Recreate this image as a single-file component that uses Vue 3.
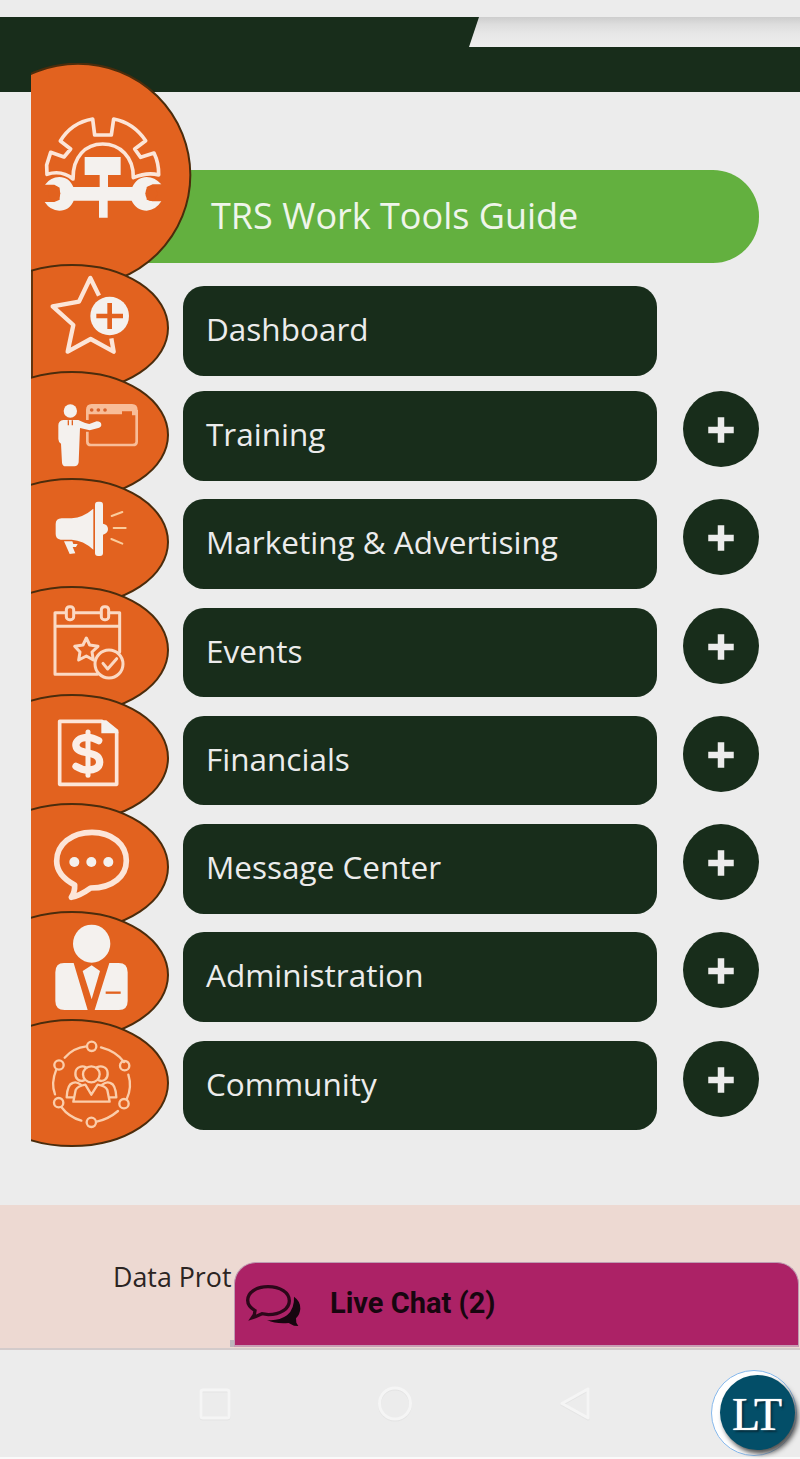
<template>
  <div class="screen">
    <header class="header">
      <div class="header__notch"></div>
    </header>

    <main class="main">
      <div class="tabs">
        <svg class="tabs__tools" viewBox="0 0 486 672">
          <ellipse class="tab-shape" cx="141" cy="336" rx="337" ry="334" />
          <g transform="translate(-33 -24)" class="line line--gear">
            <path d="M81 358L80 330L92 292L132 306L152 282L121 258Q154 203 218 192L224 240H274L281 192Q340 203 377 257L344 282L362 307L402 294Q417 325 416 360Q383 350 340 368C341 305 299 267 248 267S158 305 159 372Q125 344 81 358Z" />
            <path class="fill" d="M194 306H302V360H264V396H337C347 377 360 366 380 366Q404 366 424 388H398L380 396V434L397 439H424Q407 466 380 467C361 467 344 456 335 437H263V488H237V437H161C153 456 138 467 118 467Q91 467 74 441H103L119 434V398L103 389H75Q92 366 118 366C138 366 152 377 160 396H239V360H194Z" />
            <ellipse class="hole" cx="103" cy="415" rx="18" ry="23" />
            <ellipse class="hole" cx="394" cy="415" rx="18" ry="23" />
          </g>
        </svg>

        <svg v-for="item in items" :key="item.icon" class="tabs__item" viewBox="0 0 420 384">
          <ellipse class="tab-shape" cx="123" cy="192" rx="288" ry="189" />

          <g v-if="item.icon === 'star'" transform="translate(-33 -27)">
            <path class="edge" d="M36 45V370" />
            <path class="line line--star" d="M237 122L211 69L177 140L98 154L160 210L143 290L212 252L281 290L274 250" />
            <circle class="fill" cx="269" cy="183" r="58" />
            <path class="cut cut--plus" d="M269 144V222M229 183H309" />
          </g>

          <g v-else-if="item.icon === 'training'" transform="translate(-33 -18)">
            <g class="soft">
              <path class="soft__fill" d="M198 148V135Q198 117 215 117H336Q353 117 353 135V151H336V139H306V148Z" />
              <path d="M202 165V145M202 200V230Q202 240 213 240H338Q350 240 350 230V135" />
            </g>
            <path class="dots" d="M215 135h.1M235 135h.1M255 135h.1" />
            <circle class="fill" cx="151" cy="138" r="20" />
            <path class="fill" d="M130 165H175Q196 175 208 177L230 169Q244 169 244 180Q244 187 232 190L209 196L180 189L176 292Q174 304 163 304H138Q127 304 126 293L123 236Q115 231 115 222V181Q115 167 130 165Z" />
            <path class="cut cut--thin" d="M145 166V181M157 166V181" />
          </g>

          <g v-else-if="item.icon === 'megaphone'" transform="translate(-33 -9)">
            <path class="fill" d="M125 130H155Q190 127 220 101V224Q190 196 155 194H122Q107 192 107 177V147Q107 131 125 130ZM132 199H157L160 207H173L168 216H158L166 235L149 237Z" />
            <rect class="fill" x="225" y="80" width="24" height="163" rx="9" />
            <path class="fill" d="M249 146Q264 149 264 162T249 179Z" />
            <path class="rays" d="M275 123L307 111M281 159H317M274 192L307 206" />
          </g>

          <g v-else-if="item.icon === 'calendar'" transform="translate(-33 -18)" class="line line--calendar">
            <path d="M137 98H105V283H232M163 98H242M267 98H299V216M105 139H299" />
            <rect x="139" y="80" width="22" height="39" rx="9" />
            <rect x="244" y="80" width="22" height="39" rx="9" />
            <path d="M199 174L209 195L234 199L216 216L220 240L199 228L176 240L180 216L164 199L189 195Z" />
            <circle class="badge" cx="267" cy="252" r="42" />
            <path d="M249 250L263 267L290 236" />
          </g>

          <g v-else-if="item.icon === 'money'" transform="translate(-33 -13)">
            <path class="line line--sheet" d="M246 95H119V284H290V128" />
            <path class="fill" d="M244 92H259L295 121V131H244Z" />
            <path class="dollar" d="M236 153Q218 143 204 143C176 143 166 157 168 169C172 198 239 180 239 217C239 235 222 241 204 241Q186 241 168 230" />
            <path class="dollar dollar--bar" d="M204 127V257" />
          </g>

          <g v-else-if="item.icon === 'message'" transform="translate(-33 -339)">
            <path class="line line--bubble" d="M164 585Q110 556 110 513C110 463 155 427 216 427C277 427 319 464 319 512C319 557 280 594 212 594Q180 617 154 622Q165 606 164 585Z" />
            <circle class="fill" cx="163" cy="516" r="15" />
            <circle class="fill" cx="214" cy="516" r="15" />
            <circle class="fill" cx="265" cy="516" r="15" />
          </g>

          <g v-else-if="item.icon === 'admin'" transform="translate(-33 -33)">
            <ellipse class="fill" cx="215" cy="131" rx="56" ry="57" />
            <path class="fill" d="M132 189H161L203 330H134Q106 330 106 303V217Q106 189 132 189ZM268 189H296Q323 189 323 217V303Q323 330 297 330H224ZM215 196L240 213L215 298L188 213Z" />
            <path class="cut cut--pocket" d="M257 278H302" />
          </g>

          <g v-else transform="translate(-33 -357)" class="line line--people">
            <path d="M134 473Q160 443 199 439M243 442Q289 454 312 486M325 524Q337 561 320 598M294 633Q266 657 230 665M184 662Q146 651 124 621M105 583Q92 550 109 508" />
            <circle v-for="dot in ring" :key="dot.join()" :cx="dot[0]" :cy="dot[1]" r="14" />
            <ellipse cx="214" cy="523" rx="25" ry="24" />
            <path d="M198 502Q188 497 179 501C163 506 163 530 173 538Q180 545 192 541M230 502Q242 497 251 501C266 506 266 530 256 538Q248 545 237 541" />
            <path d="M160 605L167 570Q173 558 196 554L214 584L233 554Q257 558 262 570L269 605ZM158 592H140Q142 553 158 549Q170 544 182 554M271 592H289Q287 553 271 549Q259 544 247 554" />
          </g>
        </svg>
      </div>

      <div class="menu">
        <h1 class="menu__title">TRS Work Tools Guide</h1>

        <div v-for="item in items" :key="item.label" class="menu__row">
          <div class="menu__bar">{{ item.label }}</div>
          <button v-if="item.expandable" class="menu__plus">
            <svg viewBox="0 0 26 26"><path d="M13 3.500V22.500M3.500 13H22.500" /></svg>
          </button>
        </div>
      </div>
    </main>

    <footer class="footer">
      <p class="footer__text">Data Prot</p>

      <div class="chat">
        <svg class="chat__icon" viewBox="0 0 168 132">
          <path class="chat__back" d="M144 38Q164 52 163 74Q162 91 150 103L151 116L157 126L144 125L128 117Q91 121 63 108Q98 112 123 94Q146 74 144 38Z" />
          <path class="chat__front" d="M66 8C103 8 130 26 130 50S103 92 67 92L48 89L28 98L19 101L25 92L27 80Q5 67 5 49C5 26 30 8 66 8Z" />
        </svg>
        <span>Live Chat (2)</span>
      </div>
    </footer>

    <nav class="nav">
      <svg viewBox="0 0 40 40"><rect x="6" y="6" width="28" height="28" rx="2" /></svg>
      <svg viewBox="0 0 40 40"><circle cx="20" cy="19.500" r="15.500" /></svg>
      <svg viewBox="0 0 40 40"><path d="M33 5V34L7 19.500Z" /></svg>
      <div class="logo">
        <div class="logo__disc">LT</div>
      </div>
    </nav>
  </div>
</template>

<script setup>
const items = [
  { label: 'Dashboard', icon: 'star', expandable: false },
  { label: 'Training', icon: 'training', expandable: true },
  { label: 'Marketing & Advertising', icon: 'megaphone', expandable: true },
  { label: 'Events', icon: 'calendar', expandable: true },
  { label: 'Financials', icon: 'money', expandable: true },
  { label: 'Message Center', icon: 'message', expandable: true },
  { label: 'Administration', icon: 'admin', expandable: true },
  { label: 'Community', icon: 'community', expandable: true },
]

// small circles around the community icon
const ring = [
  [215, 439],
  [314, 497],
  [312, 611],
  [214, 667],
  [116, 608],
  [117, 495],
]
</script>

<style>
body {
  margin: 0;
  background: #ececec;
}
</style>

<style scoped>
.screen {
  width: 800px;
  height: 1459px;
  overflow: hidden;
  display: flex;
  flex-direction: column;
  background: #ececec;
  font-family: 'Open Sans', 'Noto Sans', sans-serif;
}

.header {
  height: 75px;
  margin-top: 17px;
  flex: none;
  background: #182d1b;
}

.header__notch {
  width: 331px;
  height: 30px;
  margin-left: auto;
  background: linear-gradient(#cdcdcd, #dddddd 25%, #e7e7e7 55%, #eeeeee);
  clip-path: polygon(10px 0, 100% 0, 100% 100%, 0 100%);
}

.main {
  height: 1113px;
  flex: none;
  display: flex;
  padding-left: 31px;
}

.tabs {
  position: relative;
  z-index: 1;
  width: 152px;
  flex: none;
  margin-top: -29px;
  display: flex;
  flex-direction: column;
}

.tabs svg {
  display: block;
  flex: none;
}

.tabs__tools {
  width: 162px;
  height: 224px;
  margin-bottom: -3px;
}

.tabs__item {
  width: 140px;
  height: 128px;
  margin-top: -20px;
}

.tabs__item:nth-child(3),
.tabs__item:nth-child(4) {
  margin-top: -21px;
}

.tabs__item:nth-child(7) {
  margin-top: -19px;
}

.tab-shape {
  fill: #e2621f;
  stroke: #4b2c0c;
  stroke-width: 6;
}

.edge {
  stroke: #4b2c0c;
  stroke-width: 5;
}

.line {
  fill: none;
  stroke: #fce5d8;
  stroke-width: 9;
  stroke-linejoin: round;
  stroke-linecap: round;
}

.line--gear {
  stroke-width: 11;
}

.line--star {
  stroke-width: 13;
  stroke-linecap: butt;
}

.line--calendar {
  stroke: #fbd9c3;
  stroke-width: 9;
}

.line--sheet {
  stroke-width: 11;
}

.line--bubble {
  stroke-width: 17;
}

.line--people {
  stroke: #fbcdaa;
  stroke-width: 7;
}

.fill {
  fill: #f4f1ee;
  stroke: none;
}

.hole,
.badge {
  fill: #e2621f;
}

.hole {
  stroke: none;
}

.cut {
  fill: none;
  stroke: #e2621f;
}

.cut--plus {
  stroke-width: 14;
}

.cut--thin {
  stroke-width: 4;
}

.cut--pocket {
  stroke-width: 7;
}

.soft {
  fill: none;
  stroke: #f8bd98;
  stroke-width: 8;
}

.soft__fill {
  fill: #f8bd98;
  stroke: none;
}

.dots {
  stroke: #d9622b;
  stroke-width: 11;
  stroke-linecap: round;
}

.rays {
  stroke: #fbcc9c;
  stroke-width: 6;
  stroke-linecap: round;
}

.dollar {
  fill: none;
  stroke: #fbeee6;
  stroke-width: 22;
  stroke-linecap: round;
}

.dollar--bar {
  stroke-width: 15;
}

.menu {
  padding-top: 78px;
}

.menu__title {
  width: 548px;
  height: 93px;
  margin: 0 0 23px -60px;
  padding-left: 88px;
  border-radius: 0 46px 46px 0;
  background: #63b03f;
  color: #eff5ea;
  font-size: 36px;
  font-weight: 400;
  line-height: 92px;
  white-space: nowrap;
}

.menu__row {
  display: flex;
  align-items: flex-start;
  gap: 26px;
  height: 90px;
  margin-bottom: 18.3px;
}

.menu__row:nth-child(2) {
  margin-bottom: 15px;
}

.menu__bar {
  box-sizing: border-box;
  width: 474px;
  height: 89.500px;
  padding-left: 23px;
  border-radius: 21px;
  background: #182d1b;
  color: #ececec;
  font-size: 31.500px;
  line-height: 86px;
  white-space: nowrap;
}

.menu__plus {
  display: flex;
  align-items: center;
  justify-content: center;
  width: 76px;
  height: 76px;
  padding: 0;
  border: 0;
  border-radius: 50%;
  background: #182d1b;
}

.menu__plus svg {
  width: 26px;
  height: 26px;
  margin-top: 2px;
}

.menu__plus path {
  stroke: #ececec;
  stroke-width: 6.500;
  stroke-linecap: square;
}

.footer {
  position: relative;
  box-sizing: border-box;
  height: 145px;
  flex: none;
  padding: 53px 0 0 113px;
  border-bottom: 2px solid #d3cbcb;
  background: #edd9d2;
}

.footer__text {
  margin: 0;
  color: #2b2422;
  font-size: 26.800px;
  line-height: 38px;
}

.chat {
  position: absolute;
  right: 1px;
  bottom: 1px;
  box-sizing: border-box;
  width: 565px;
  height: 85px;
  display: flex;
  align-items: center;
  padding-left: 10px;
  border: 1px solid #bf9db3;
  border-bottom: 2px solid #c89db4;
  border-radius: 22px 22px 0 0;
  background: #ac2266;
  color: #17060f;
  font: 700 29px/1 Roboto, sans-serif;
}

.chat::before {
  content: '';
  position: absolute;
  left: -5px;
  bottom: -2px;
  width: 4px;
  height: 7px;
  background: #bdb6bc;
}

.chat span {
  margin-top: -2px;
}

.chat__icon {
  width: 56px;
  height: 44px;
  margin: 4px 28px 0 1px;
}

.chat__back {
  fill: #17060f;
}

.chat__front {
  fill: none;
  stroke: #2c0719;
  stroke-width: 10;
}

.nav {
  position: relative;
  height: 107px;
  flex: none;
  display: flex;
  align-items: center;
  gap: 140px;
  padding-left: 195px;
  border-bottom: 2px solid #fafafa;
}

.nav svg {
  width: 40px;
  height: 40px;
  fill: none;
  stroke: #f5f5f5;
  stroke-width: 3;
  stroke-linejoin: round;
  filter: drop-shadow(0 1px 0 #e3e3e3);
}

.logo {
  position: absolute;
  top: 20px;
  left: 711px;
  box-sizing: border-box;
  width: 86px;
  height: 86px;
  padding: 4px 0 0 8px;
  border: 1px solid #86b9ed;
  border-radius: 50%;
  background: #fff;
}

.logo__disc {
  width: 75px;
  height: 75px;
  border-radius: 50%;
  background: #034e68;
  box-shadow: 3px 4px 5px #555;
  color: #fff;
  font: 46px/80px 'Liberation Serif', serif;
  letter-spacing: -2px;
  text-indent: -3px;
  text-align: center;
  text-shadow: 0 0 1px #fff, 2px 2px 2px #062c3b;
}
</style>
